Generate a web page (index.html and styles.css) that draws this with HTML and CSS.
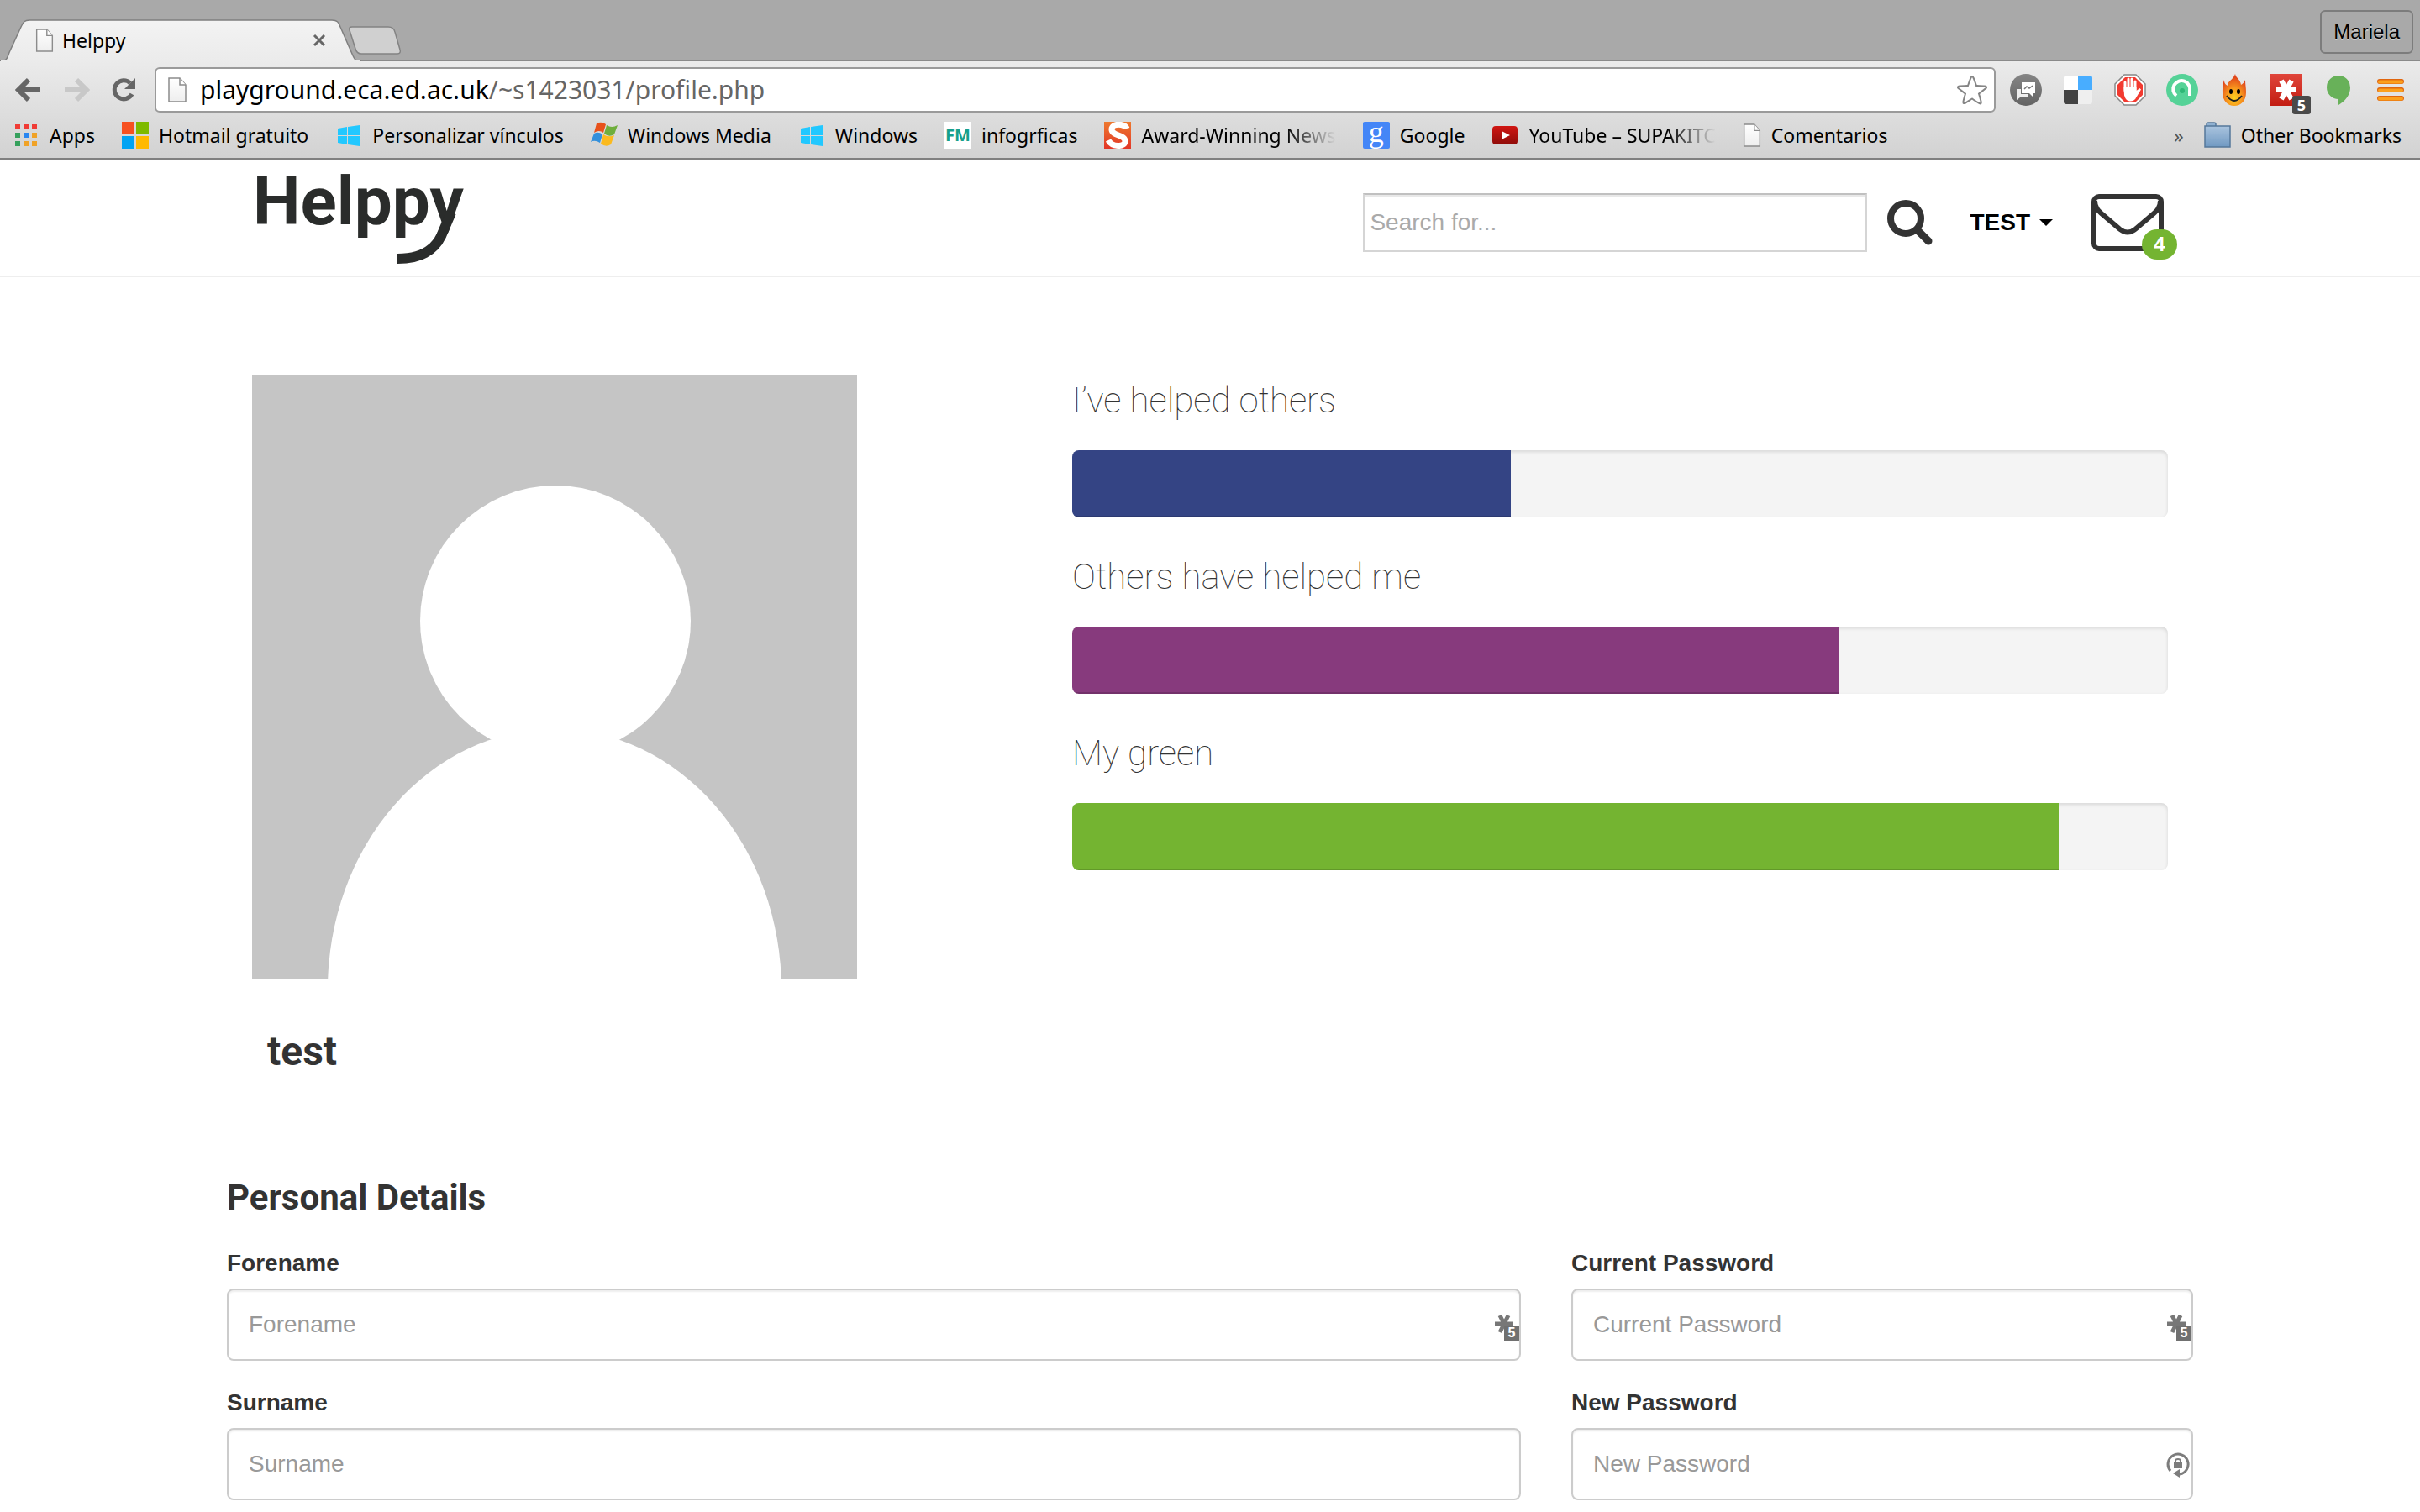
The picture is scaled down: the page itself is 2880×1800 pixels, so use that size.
FILE: index.html
```html
<!DOCTYPE html>
<html lang="en">
<head>
<meta charset="utf-8">
<title>Helppy</title>
<link rel="stylesheet" href="styles.css">
</head>
<body>
<svg class="defs" aria-hidden="true">
  <defs>
    <linearGradient id="paper" x1="0" y1="0" x2="0" y2="1"><stop offset="0" stop-color="#fff"/><stop offset="1" stop-color="#eee"/></linearGradient>
    <linearGradient id="tabfill" x1="0" y1="0" x2="0" y2="1"><stop offset="0" stop-color="#f3f3f3"/><stop offset="1" stop-color="#ebebeb"/></linearGradient>
    <linearGradient id="greyball" x1="0" y1="0" x2="0" y2="1"><stop offset="0" stop-color="#858585"/><stop offset="1" stop-color="#636363"/></linearGradient>
    <linearGradient id="lastred" x1="0" y1="0" x2="0" y2="1"><stop offset="0" stop-color="#e0453a"/><stop offset="1" stop-color="#c21d12"/></linearGradient>
    <linearGradient id="folderblue" x1="0" y1="0" x2="0" y2="1"><stop offset="0" stop-color="#aac4de"/><stop offset="1" stop-color="#7099c2"/></linearGradient>
    <linearGradient id="smash" x1="0" y1="0" x2="0" y2="1"><stop offset="0" stop-color="#ee7a2f"/><stop offset="1" stop-color="#e23627"/></linearGradient>
    <linearGradient id="tubered" x1="0" y1="0" x2="0" y2="1"><stop offset="0" stop-color="#d01612"/><stop offset="1" stop-color="#8f0c09"/></linearGradient>
    <radialGradient id="fire" cx=".5" cy=".75" r=".65"><stop offset="0" stop-color="#ffd21f"/><stop offset=".5" stop-color="#f7941d"/><stop offset="1" stop-color="#e0451b"/></radialGradient>
    <symbol id="page" viewBox="0 0 22 30"><path d="M1 1h13l7 8v20H1z" fill="url(#paper)" stroke="#8c8c8c" stroke-width="1.5"/><path d="M14 1v8h7" fill="#fff" stroke="#8c8c8c" stroke-width="1.5"/></symbol>
    <symbol id="win8" viewBox="0 0 32 32"><path fill="#22c8ff" d="M3 8l11-2v10H3zM15 6l14-2v12H15zM3 17h11v10L3 25zM15 17h14v12l-14-2z"/></symbol>
    <symbol id="star6" viewBox="0 0 24 24"><path d="M1 12h22M7 2l10 20M17 2L7 22" stroke="currentColor" stroke-width="5" fill="none"/></symbol>
  </defs>
</svg>

<header class="browser">
  <div class="tabstrip">
    <div class="tab">
      <svg class="tab-shape" viewBox="0 0 430 50" aria-hidden="true"><path d="M0 49.500c8 0 8-2 11-10L25 9c3-6 4-8 10-8h360c6 0 8 2 10 8l14 32c3 7 4 9 11 9" fill="url(#tabfill)" stroke="#7f7f7f" stroke-width="1.500"/><path d="M1 50h428" stroke="#ebebeb" stroke-width="2"/></svg>
      <svg class="tab-page" aria-hidden="true"><use href="#page"/></svg>
      <span class="tab-title">Helppy</span>
      <button class="tab-close" aria-label="Close tab"><svg viewBox="0 0 16 16"><path d="M2 2l12 12M14 2L2 14" stroke="#666" stroke-width="3"/></svg></button>
    </div>
    <button class="newtab" aria-label="New tab"><svg viewBox="0 0 64 34"><path d="M5 1h43c5 0 7 2 8 6l6 21c1 3 0 5-3 5H16c-4 0-6-2-7-6L2 5C1 2 2 1 5 1z" fill="#d0d0d0" stroke="#838383" stroke-width="1.500"/></svg></button>
    <button class="user">Mariela</button>
  </div>

  <div class="toolbar">
    <button class="tool" aria-label="Back"><svg viewBox="0 0 32 32"><path d="M16 4L4 16l12 12M4 16h26" fill="none" stroke="#666" stroke-width="6"/></svg></button>
    <button class="tool" aria-label="Forward"><svg viewBox="0 0 32 32"><path d="M16 4l12 12-12 12M28 16H2" fill="none" stroke="#c8c8c8" stroke-width="6"/></svg></button>
    <button class="tool" aria-label="Reload"><svg viewBox="0 0 32 32"><path d="M25 21a11 11 0 1 1-2-13" fill="none" stroke="#666" stroke-width="5"/><path d="M29 2v13H16z" fill="#666"/></svg></button>
    <div class="omnibox">
      <svg class="omni-page" aria-hidden="true"><use href="#page"/></svg>
      <a class="url" href="#">playground.eca.ed.ac.uk<span class="url-path">/~s1423031/profile.php</span></a>
      <button class="star" aria-label="Bookmark this page"><svg viewBox="0 0 36 36"><path d="M18 2c1 0 1.500 1 5 11 11 .5 11.500 .5 12 1.500s-.5 1.500-9 8c3 10 3 10.500 2.500 11.500s-2 .5-10.500-5.500C9.500 34 9 34.500 8 34s-1-1.500 2-11.500C1.500 16 .5 15.500 1 14.500S2 13.500 13 13C16.500 3 17 2 18 2z" fill="#fff" stroke="#858585" stroke-width="2"/></svg></button>
    </div>
    <div class="extensions">
      <svg viewBox="0 0 38 38"><circle cx="19" cy="19" r="19" fill="url(#greyball)"/><path d="M14 10h16v13h-3v4l-4-4h-9z" fill="#fff"/><path d="M8 18h5v6h8v4h-9l-4 3z" fill="#eee"/><path d="M17 18l3-3 3 2 4-3" stroke="#777" stroke-width="1.500" fill="none"/></svg>
      <svg viewBox="0 0 38 38"><path d="M19 2v17H2V5q0-3 3-3z" fill="#fff"/><path d="M19 2h14q3 0 3 3v14H19z" fill="#48adff"/><path d="M2 19h17v17H5q-3 0-3-3z" fill="#434343"/><path d="M19 19h17v14q0 3-3 3H19z" fill="#efefef"/></svg>
      <svg viewBox="0 0 38 38"><path d="M12 1h14l11 11v14L26 37H12L1 26V12z" fill="#fff" stroke="#888" stroke-width="1.500"/><path d="M13 4h12l9 9v12l-9 9H13l-9-9V13z" fill="#f23a30"/><path d="M13 20V10M17 18V6M21 18V6M25 20V9" stroke="#fff" stroke-width="3" stroke-linecap="round"/><path d="M11.500 16h15v4l4-3 1.500 1.500-6 10q-2 4-7 4t-7-7z" fill="#fff"/></svg>
      <svg viewBox="0 0 38 38"><circle cx="19" cy="19" r="19" fill="#55d297"/><path d="M12 26A10 10 0 1 1 28 20V26" fill="none" stroke="#fff" stroke-width="4"/><circle cx="19" cy="20" r="3" fill="#2fb877"/></svg>
      <svg viewBox="0 0 38 38"><path d="M20 0c1 5 6 6 7 13 2-1 4-3 5-6 0 6 1 9 1 15 0 10-6 16-14 16S5 32 5 22c0-6 0-9 2-15 0 4 1 5 4 7C11 8 18 7 20 0z" fill="url(#fire)"/><ellipse cx="15" cy="21" rx="2" ry="3"/><ellipse cx="24" cy="21" rx="2" ry="3"/><path d="M10 26q9 12 18 0" fill="none" stroke="#222" stroke-width="2"/></svg>
      <span class="lastpass"><svg viewBox="0 0 38 38"><path d="M0 0h38v38H0z" fill="url(#lastred)"/><path d="M7 19h24M13 8l12 22M25 8L13 30" stroke="#fff" stroke-width="6"/></svg><b class="ext-badge">5</b></span>
      <svg viewBox="0 0 38 38"><path d="M19 2a14 14 0 0 1 14 14c0 10-7 17-14 21v-7a14 14 0 0 1 0-28z" fill="#68b159"/></svg>
      <svg viewBox="0 0 38 38"><path d="M6 9h26M6 19h26M6 29h26" stroke="#e0660f" stroke-width="6" stroke-linecap="round"/><path d="M6 9.500h26M6 19.500h26M6 29.500h26" stroke="#fba01d" stroke-width="4" stroke-linecap="round"/></svg>
    </div>
  </div>

  <nav class="bookmarks" aria-label="Bookmarks">
    <a class="bm" href="#"><svg viewBox="0 0 32 32"><g fill="#f03c36"><path d="M3 3h6v6H3zM13 3h6v6h-6zM23 3h6v6h-6z"/></g><path d="M3 13h6v6H3zM3 23h6v6H3z" fill="#35a05c"/><path d="M13 13h6v6h-6z" fill="#2a86f0"/><path d="M23 13h6v6h-6zM13 23h6v6h-6zM23 23h6v6h-6z" fill="#f0a226"/></svg><span>Apps</span></a>
    <a class="bm" href="#"><svg viewBox="0 0 32 32"><path d="M0 0h15v15H0z" fill="#f65121"/><path d="M17 0h15v15H17z" fill="#7eba00"/><path d="M0 17h15v15H0z" fill="#00a3f3"/><path d="M17 17h15v15H17z" fill="#ffb900"/></svg><span>Hotmail gratuito</span></a>
    <a class="bm" href="#"><svg><use href="#win8"/></svg><span>Personalizar vínculos</span></a>
    <a class="bm" href="#"><svg viewBox="0 0 32 32"><path d="M7 2q6-3 11 1l-3 10q-5-4-11 0z" fill="#e8511b"/><path d="M19 4q6 4 13 0l-4 11q-6 4-12-1z" fill="#6fae3c"/><path d="M4 14q5-3 10 1l-3 10q-6-4-11-1z" fill="#3390dc"/><path d="M15 15q6 4 13 1l-4 11q-6 4-12-1z" fill="#fbba1e"/></svg><span>Windows Media</span></a>
    <a class="bm" href="#"><svg><use href="#win8"/></svg><span>Windows</span></a>
    <a class="bm" href="#"><b class="fm">FM</b><span>infogrficas</span></a>
    <a class="bm" href="#"><svg viewBox="0 0 32 32"><path d="M0 0h32v32H0z" fill="url(#smash)"/><path d="M27 8C25 2 9 1 9 9c0 8 16 6 16 14 0 8-16 7-20-1" fill="none" stroke="#fff" stroke-width="7"/></svg><span class="fade">Award-Winning News</span></a>
    <a class="bm" href="#"><b class="goog">g</b><span>Google</span></a>
    <a class="bm" href="#"><svg viewBox="0 0 32 32"><rect x="1" y="5" width="30" height="22" rx="4" fill="url(#tubered)"/><path d="M12 11l10 5-10 5z" fill="#fff"/></svg><span class="fade">YouTube – SUPAKITC</span></a>
    <a class="bm" href="#"><svg class="sheet"><use href="#page"/></svg><span>Comentarios</span></a>
    <button class="more" aria-label="More bookmarks">»</button>
    <a class="bm" href="#"><svg viewBox="0 0 32 32"><path d="M3 6V3q0-2 2-2h7q2 0 2 2v3" fill="#8fb0d0" stroke="#56789b" stroke-width="1.500"/><path d="M1 5h30v25H1z" fill="url(#folderblue)" stroke="#56789b" stroke-width="1.500"/></svg><span>Other Bookmarks</span></a>
  </nav>
</header>

<header class="site-head">
  <div class="container head-row">
    <a class="brand" href="#" aria-label="Helppy"><svg viewBox="0 0 250 110"><text class="brand-text" x="-4" y="63">Helppy</text><path d="M207 65h12l-8 19h-4z" fill="#fff"/><path d="M232 49L220 77Q207 104 168 104" fill="none" stroke="#2a2c2b" stroke-width="12"/></svg></a>
    <form class="search">
      <input class="search-box" type="text" placeholder="Search for..." aria-label="Search for">
      <button class="search-go" type="button" aria-label="Search"><svg viewBox="0 0 54 54"><circle cx="22" cy="22" r="18" fill="none" stroke="#333" stroke-width="8"/><path d="M36 36l13 13" stroke="#333" stroke-width="9" stroke-linecap="round"/></svg></button>
    </form>
    <button class="account">TEST<span class="caret"></span></button>
    <a class="mail" href="#" aria-label="Messages"><svg viewBox="0 0 86 68"><rect x="3" y="3" width="80" height="62" rx="6" fill="none" stroke="#333" stroke-width="6"/><path d="M4 8c0 8 4 12 10 17l20 17q9 7 18 0l20-17c6-5 10-9 10-17" fill="none" stroke="#333" stroke-width="6"/></svg><span class="mail-badge">4</span></a>
  </div>
</header>

<main class="container">
  <section class="profile">
    <div>
      <svg class="avatar" viewBox="0 0 720 720" role="img" aria-label="Profile picture"><path d="M0 0h720v720H0z" fill="#c5c5c5"/><circle cx="361" cy="293" r="161" fill="#fff"/><ellipse cx="360" cy="732" rx="270" ry="310" fill="#fff"/></svg>
      <h1 class="name">test</h1>
    </div>
    <div class="stats">
      <h2 class="stat-title">I’ve helped others</h2>
      <div class="bar" role="progressbar" aria-label="I’ve helped others" aria-valuenow="40"><div class="fill blue" style="width:40%"></div></div>
      <h2 class="stat-title">Others have helped me</h2>
      <div class="bar" role="progressbar" aria-label="Others have helped me" aria-valuenow="70"><div class="fill purple" style="width:70%"></div></div>
      <h2 class="stat-title">My green</h2>
      <div class="bar" role="progressbar" aria-label="My green" aria-valuenow="90"><div class="fill green" style="width:90%"></div></div>
    </div>
  </section>

  <form class="details">
    <h2 class="details-title">Personal Details</h2>
    <div class="col-wide">
      <div class="group"><label for="forename">Forename</label><div class="field"><input id="forename" type="text" placeholder="Forename"><span class="fill-mark"><svg><use href="#star6"/></svg><b>5</b></span></div></div>
      <div class="group"><label for="surname">Surname</label><div class="field"><input id="surname" type="text" placeholder="Surname"></div></div>
    </div>
    <div class="col-narrow">
      <div class="group"><label for="current">Current Password</label><div class="field"><input id="current" type="password" placeholder="Current Password"><span class="fill-mark"><svg><use href="#star6"/></svg><b>5</b></span></div></div>
      <div class="group"><label for="new">New Password</label><div class="field"><input id="new" type="password" placeholder="New Password"><svg class="gen-mark" viewBox="0 0 28 30" aria-hidden="true"><path d="M5 22A12 12 0 1 1 16 26" fill="none" stroke="#7d7d7d" stroke-width="3"/><path d="M8 25l8-5v10z" fill="#7d7d7d"/><path d="M9 12h10v7H9z" fill="#7d7d7d"/><path d="M11 12v-2q0-2 3-2t3 2v2" fill="none" stroke="#7d7d7d" stroke-width="2"/></svg></div></div>
    </div>
  </form>
</main>
</body>
</html>
```
FILE: styles.css
```css
* { box-sizing: border-box; }
body { margin: 0; background: #fff; color: #333; font: 28px/40px "Liberation Sans", Arial, sans-serif; }
button { border: 0; background: none; padding: 0; margin: 0; font: inherit; color: inherit; }
a { color: inherit; text-decoration: none; }
svg { display: block; }
h1, h2 { margin: 0; font-family: Roboto, sans-serif; }
.defs { position: absolute; width: 0; height: 0; }

/* browser frame */
.browser { color: #000; font: 23px/32px "Noto Sans", sans-serif; background: linear-gradient(#ebebeb 72px, #d2d2d2); border-bottom: 2px solid #808080; }
.tabstrip { display: flex; height: 73px; padding-right: 8px; background: #a9a9a9; border-bottom: 1px solid #8a8a8a; }
.tab { position: relative; display: flex; align-items: center; gap: 10px; width: 430px; height: 50px; margin-top: 23px; padding: 0 42px; }
.tab-shape { position: absolute; left: 0; top: 0; width: 430px; height: 50px; }
.tab-page { position: relative; width: 22px; height: 28px; }
.tab-title { position: relative; flex: 1; }
.tab-close { position: relative; width: 16px; height: 16px; }
.newtab { width: 64px; height: 34px; margin: 31px 0 0 -16px; position: relative; }
.user { height: 52px; margin: 12px 0 0 auto; padding: 0 14px; border: 2px solid #7c7c7c; border-radius: 6px; font: 24px "Liberation Sans", sans-serif; text-shadow: 0 2px 0 #ccc; }
.toolbar { display: flex; align-items: center; height: 68px; padding: 0 16px 0 18px; gap: 25px; }
.tool { width: 32px; height: 32px; }
.omnibox { flex: 1; display: flex; align-items: center; gap: 16px; height: 54px; margin-left: -5px; padding: 0 8px 0 14px; border: 2px solid #9a9a9a; border-radius: 6px; background: #fff; font-size: 30px; }
.omni-page { width: 22px; height: 30px; }
.url { flex: 1; }
.url-path { color: #666; }
.star { width: 36px; height: 36px; }
.extensions { display: flex; gap: 24px; margin-left: -8px; }
.extensions svg { width: 38px; height: 38px; }
.lastpass { position: relative; }
.ext-badge { position: absolute; left: 26px; top: 26px; width: 22px; height: 22px; border-radius: 3px; background: #4a4a4a; color: #fff; font-size: 18px; line-height: 22px; text-align: center; }
.bookmarks { display: flex; align-items: center; height: 47px; padding: 0 22px 7px 15px; gap: 32px; }
.bm { display: flex; align-items: center; gap: 12px; white-space: nowrap; }
.bm svg, .fm, .goog { width: 32px; height: 32px; }
.bm .sheet { width: 22px; height: 28px; }
.fm { background: #fff; color: #16a08c; font: bold 20px/32px "Noto Sans", sans-serif; text-align: center; }
.goog { border-radius: 2px; background: #4486f7; color: #fff; font: 36px/24px "Liberation Serif", serif; text-align: center; }
.fade { -webkit-mask-image: linear-gradient(90deg, #000 74%, transparent); mask-image: linear-gradient(90deg, #000 74%, transparent); }
.more { margin: 0 -8px 0 auto; color: #555; }

/* site */
.container { width: 82%; max-width: 2340px; margin: 0 auto; }
.site-head { border-bottom: 2px solid #eee; }
.head-row { display: flex; align-items: center; height: 138px; padding: 0 20px 0 30px; }
.brand { margin: 0 auto 0 5px; }
.brand svg { width: 250px; height: 110px; overflow: visible; }
.brand-text { font: bold 80px Roboto, sans-serif; fill: #2a2c2b; }
.search { display: flex; align-items: center; gap: 24px; margin-top: 12px; }
.search-box { width: 600px; height: 70px; padding: 0 6px; border: 2px solid #d5d5d5; border-top-color: #c0c0c0; box-shadow: inset 0 2px 0 #e8e8e8; font: inherit; }
.search-box::placeholder { color: #aaa; opacity: 1; }
.search-go { width: 54px; height: 54px; }
.account { display: flex; align-items: center; gap: 11px; margin: 12px 46px 0 44px; color: #000; font-weight: bold; }
.caret { border: 8px solid transparent; border-top-color: #000; border-bottom: 0; }
.mail { position: relative; margin: 12px 15px 0 0; }
.mail svg { width: 86px; height: 68px; }
.mail-badge { position: absolute; left: 60px; top: 42px; width: 42px; height: 36px; border-radius: 18px; background: #74b431; color: #fff; font: bold 24px/36px "Liberation Sans", sans-serif; text-align: center; }

.profile { display: grid; grid-template-columns: 720fr 1304fr; gap: 256px; padding: 116px 30px 0; }
.avatar { width: 100%; height: auto; }
.name { margin: 58px 0 0 18px; font-size: 48px; line-height: 56px; }
.stats { padding-top: 7px; }
.stat-title { margin-bottom: 35px; font-size: 42px; line-height: 48px; font-weight: 100; }
.bar { height: 80px; margin-bottom: 47px; border-radius: 8px; overflow: hidden; background: #f4f4f4; box-shadow: inset 0 2px 4px rgba(0, 0, 0, .12); }
.fill { height: 100%; box-shadow: inset 0 -2px 0 rgba(0, 0, 0, .15); }
.blue { background: #344484; }
.purple { background: #873a7d; }
.green { background: #74b431; }

.details { display: grid; grid-template-columns: repeat(12, 1fr); column-gap: 60px; margin-top: 122px; }
.details-title { grid-column: 1 / -1; margin-bottom: 34px; font-size: 42px; line-height: 48px; }
.col-wide, .col-narrow { display: grid; gap: 30px; }
.col-wide { grid-column: span 8; }
.col-narrow { grid-column: span 4; }
.group label { display: block; margin-bottom: 10px; font-weight: bold; }
.field { position: relative; }
.field input { display: block; width: 100%; height: 86px; padding: 0 24px; border: 2px solid #ccc; border-radius: 8px; box-shadow: inset 0 2px 2px rgba(0, 0, 0, .07); font: inherit; }
.field input::placeholder { color: #999; opacity: 1; }
.fill-mark { position: absolute; right: 2px; top: 30px; width: 30px; height: 32px; color: #777; }
.fill-mark svg { width: 24px; height: 24px; }
.fill-mark b { position: absolute; right: 0; bottom: 0; width: 18px; height: 18px; background: #707070; color: #fff; font-size: 16px; line-height: 18px; text-align: center; }
.gen-mark { position: absolute; right: 4px; top: 29px; width: 28px; height: 30px; }
```
